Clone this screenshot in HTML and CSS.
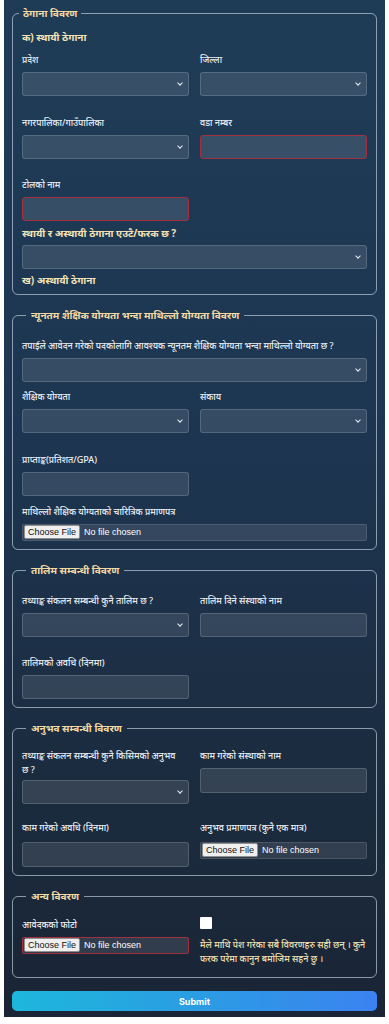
FILE: index.html
```html
<!DOCTYPE html>
<html lang="ne">
  <head>
    <meta charset="UTF-8" />
    <meta name="viewport" content="width=device-width, initial-scale=1.0" />
    <title>आवेदन फारम</title>
    <link rel="stylesheet" href="styles.css">
  </head>
  <body>
    <form class="apply-form">
      <!-- ठेगाना -->
      <fieldset class="section address">
        <legend>ठेगाना विवरण</legend>
        <h3 class="sub-title first">क) स्थायी ठेगाना</h3>
        <div class="row gap-20">
          <div class="field">
            <label>प्रदेश</label>
            <div class="select-wrap"><select></select></div>
          </div>
          <div class="field">
            <label>जिल्ला</label>
            <div class="select-wrap"><select></select></div>
          </div>
        </div>
        <div class="row gap-19">
          <div class="field">
            <label>नगरपालिका/गाउँपालिका</label>
            <div class="select-wrap"><select></select></div>
          </div>
          <div class="field">
            <label>वडा नम्बर</label>
            <input type="text" class="invalid" />
          </div>
        </div>
        <div class="row gap-5">
          <div class="field">
            <label>टोलको नाम</label>
            <input type="text" class="invalid" />
          </div>
        </div>
        <h3 class="sub-title">स्थायी र अस्थायी ठेगाना एउटै/फरक छ ?</h3>
        <div class="select-wrap full gap-4"><select></select></div>
        <h3 class="sub-title last">ख) अस्थायी ठेगाना</h3>
      </fieldset>

      <!-- माथिल्लो योग्यता -->
      <fieldset class="section">
        <legend>न्यूनतम शैक्षिक योग्यता भन्दा माथिल्लो योग्यता विवरण</legend>
        <div class="field top gap-8">
          <label>तपाईले आवेदन गरेको पदकोलागि आवश्यक न्यूनतम शैक्षिक योग्यता भन्दा माथिल्लो योग्यता छ ?</label>
          <div class="select-wrap"><select></select></div>
        </div>
        <div class="row gap-20">
          <div class="field">
            <label>शैक्षिक योग्यता</label>
            <div class="select-wrap"><select></select></div>
          </div>
          <div class="field">
            <label>संकाय</label>
            <div class="select-wrap"><select></select></div>
          </div>
        </div>
        <div class="row gap-9">
          <div class="field">
            <label>प्राप्ताङ्क(प्रतिशत/GPA)</label>
            <input type="text" />
          </div>
        </div>
        <div class="field">
          <label>माथिल्लो शैक्षिक योग्यताको चारित्रिक प्रमाणपत्र</label>
          <input type="file" />
        </div>
      </fieldset>

      <!-- तालिम -->
      <fieldset class="section">
        <legend>तालिम सम्बन्धी विवरण</legend>
        <div class="row top gap-19">
          <div class="field">
            <label>तथ्याङ्क संकलन सम्बन्धी कुनै तालिम छ ?</label>
            <div class="select-wrap"><select></select></div>
          </div>
          <div class="field">
            <label>तालिम दिने संस्थाको नाम</label>
            <input type="text" />
          </div>
        </div>
        <div class="row">
          <div class="field">
            <label>तालिमको अवधि (दिनमा)</label>
            <input type="text" />
          </div>
        </div>
      </fieldset>

      <!-- अनुभव -->
      <fieldset class="section experience">
        <legend>अनुभव सम्बन्धी विवरण</legend>
        <div class="row top gap-17">
          <div class="field">
            <label class="tight">तथ्याङ्क संकलन सम्बन्धी कुनै किसिमको अनुभव छ ?</label>
            <div class="select-wrap"><select></select></div>
          </div>
          <div class="field">
            <label>काम गरेको संस्थाको नाम</label>
            <input type="text" class="tall" />
          </div>
        </div>
        <div class="row">
          <div class="field">
            <label>काम गरेको अवधि (दिनमा)</label>
            <input type="text" class="tall" />
          </div>
          <div class="field">
            <label>अनुभव प्रमाणपत्र (कुनै एक मात्र)</label>
            <input type="file" />
          </div>
        </div>
      </fieldset>

      <!-- अन्य -->
      <fieldset class="section other">
        <legend>अन्य विवरण</legend>
        <div class="row top">
          <div class="field photo">
            <label>आवेदकको फोटो</label>
            <input type="file" class="invalid" />
          </div>
          <div class="declare">
            <input type="checkbox" />
            <p>मैले माथि पेश गरेका सबै विवरणहरु सही छन् । कुनै फरक परेमा कानुन बमोजिम सहने छु ।</p>
          </div>
        </div>
      </fieldset>

      <button type="submit" class="submit-btn">Submit</button>
    </form>
  </body>
</html>
```

FILE: styles.css
```css
body {
  margin: 0;
  background-color: #fff;
  font-family: "Noto Sans", "Noto Sans Devanagari", sans-serif;
}

.apply-form {
  margin: 0 4px;
  padding: 7px 8px 6px;
  background: linear-gradient(180deg, #1f3c57 0%, #1d3550 45%, #1b2c40 75%, #1a2535 100%);
}

.section {
  margin: 0 0 14px;
  padding: 0 9px 8px;
  border: 1px solid rgba(215, 228, 238, 0.6);
  border-radius: 6px;
  min-width: 0;
}

.section legend {
  margin-left: 4px;
  padding: 0 5px;
  color: #f3d9a2;
  font-size: 10px;
  line-height: 12px;
  font-weight: 700;
}

.address {
  padding-bottom: 7px;
}

.address legend {
  margin-left: -3px;
  padding: 0 4px;
}

.sub-title {
  margin: 0 0 5px;
  color: #f4e2b4;
  font-size: 10px;
  line-height: 14px;
  font-weight: 700;
}

.sub-title.first {
  margin-top: 11px;
  margin-bottom: 9px;
}

.sub-title.last {
  margin-bottom: 0;
}

.row {
  display: grid;
  grid-template-columns: 1fr 1fr;
  column-gap: 11px;
  align-items: start;
}

.top {
  margin-top: 18px;
}

.gap-4 { margin-bottom: 4px; }
.gap-5 { margin-bottom: 5px; }
.gap-8 { margin-bottom: 8px; }
.gap-9 { margin-bottom: 9px; }
.gap-17 { margin-bottom: 17px; }
.gap-19 { margin-bottom: 19px; }
.gap-20 { margin-bottom: 20px; }

.field label {
  display: block;
  margin-bottom: 5px;
  color: #e9eef3;
  font-size: 9px;
  line-height: 14px;
  font-weight: 500;
}

.field label.tight {
  margin-bottom: 3px;
  padding-right: 12px;
}

.field input[type="text"],
.select-wrap select {
  display: block;
  box-sizing: border-box;
  width: 100%;
  height: 24px;
  margin: 0;
  padding: 0 6px;
  background-color: rgba(255, 255, 255, 0.11);
  border: 1px solid rgba(255, 255, 255, 0.16);
  border-radius: 3px;
  color: #fff;
  font-size: 10px;
  -webkit-appearance: none;
  appearance: none;
  outline: none;
}

.field input.tall {
  height: 25px;
}

.field input.invalid,
.field input[type="file"].invalid {
  border-color: #a3303f;
}

.select-wrap {
  position: relative;
}

.select-wrap::after {
  content: "";
  position: absolute;
  right: 7px;
  top: 9px;
  width: 3px;
  height: 3px;
  border-right: 1.7px solid #e8eef4;
  border-bottom: 1.7px solid #e8eef4;
  transform: rotate(45deg);
  pointer-events: none;
}

.field input[type="file"] {
  display: block;
  box-sizing: border-box;
  width: 100%;
  height: 17px;
  margin: 0;
  padding: 0 1px;
  background-color: rgba(255, 255, 255, 0.1);
  border: 1px solid rgba(255, 255, 255, 0.12);
  border-radius: 2px;
  color: #fff;
  font-family: "Liberation Sans", Arial, sans-serif;
  font-size: 9px;
  line-height: 15px;
}

.field input[type="file"]::file-selector-button {
  height: 14px;
  margin: 0 4px 0 0;
  padding: 0 3px;
  background-color: #efefef;
  border: 1px solid #8f8f8f;
  border-radius: 2px;
  color: #111;
  font-family: "Liberation Sans", Arial, sans-serif;
  font-size: 9px;
}

.experience .top {
  margin-top: 15px;
}

.experience .row:last-child .field label {
  margin-bottom: 7px;
}

.other .top {
  margin-top: 15px;
}

.photo {
  padding-top: 1px;
}

.declare input[type="checkbox"] {
  display: block;
  width: 12px;
  height: 12px;
  margin: 0 0 9px;
  background: #fff;
  border: none;
  border-radius: 1px;
  -webkit-appearance: none;
  appearance: none;
}

.declare p {
  margin: 0 0 3px;
  color: #f2e0b2;
  font-size: 9px;
  line-height: 14px;
  font-weight: 500;
}

.submit-btn {
  display: block;
  width: 100%;
  height: 20px;
  margin-top: -1px;
  padding: 0;
  border: none;
  border-radius: 5px;
  background: linear-gradient(90deg, #1db7dc 0%, #2b9de3 50%, #3b82f0 100%);
  color: #fff;
  font-family: Inter, "Noto Sans", sans-serif;
  font-size: 9px;
  font-weight: 700;
  cursor: pointer;
}
```
